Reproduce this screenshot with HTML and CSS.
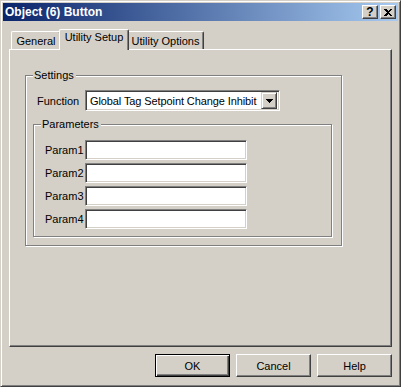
FILE: index.html
```html
<!DOCTYPE html>
<html lang="en">
<head>
    <meta charset="UTF-8">
    <title>Object (6) Button</title>
    <link rel="stylesheet" href="styles.css">
</head>
<body>

    <div class="window">
        <div class="titlebar">
            <span class="title">Object (6) Button</span>
            <div class="caption-buttons">
                <button class="caption-btn">?</button>
                <button class="caption-btn">
                    <svg width="8" height="7" viewBox="0 0 8 7" shape-rendering="crispEdges">
                        <path d="M0 0H2L4 2L6 0H8L5 3.5L8 7H6L4 5L2 7H0L3 3.5Z" fill="#000"/>
                    </svg>
                </button>
            </div>
        </div>

        <div class="content">
            <div class="tabs">
                <div class="tab tab-general">General</div>
                <div class="tab tab-setup active">Utility Setup</div>
                <div class="tab tab-options">Utility Options</div>
            </div>

            <div class="panel">
                <div class="group settings">
                    <div class="group-title">Settings</div>
                    <div class="function-row">
                        <label>Function</label>
                        <div class="combo">
                            <span class="combo-text">Global Tag Setpoint Change Inhibit</span>
                            <span class="combo-btn">
                                <svg width="7" height="4" viewBox="0 0 7 4" shape-rendering="crispEdges">
                                    <path d="M0 0H7V1H6V2H5V3H4V4H3V3H2V2H1V1H0Z" fill="#000"/>
                                </svg>
                            </span>
                        </div>
                    </div>

                    <!-- Parameters -->
                    <div class="group params">
                        <div class="group-title">Parameters</div>
                        <div class="param-list">
                            <div class="param-row"><label for="p1">Param1</label><input type="text" id="p1"></div>
                            <div class="param-row"><label for="p2">Param2</label><input type="text" id="p2"></div>
                            <div class="param-row"><label for="p3">Param3</label><input type="text" id="p3"></div>
                            <div class="param-row"><label for="p4">Param4</label><input type="text" id="p4"></div>
                        </div>
                    </div>
                </div>
            </div>

            <div class="dialog-buttons">
                <button class="default">OK</button>
                <button>Cancel</button>
                <button>Help</button>
            </div>
        </div>
    </div>

</body>
</html>
```

FILE: styles.css
```css
* {
    box-sizing: border-box;
}
body {
    margin: 0;
    font-family: 'Liberation Sans', Arial, sans-serif;
    font-size: 11px;
    color: #000;
    background: #d4d0c8;
}
.window {
    width: 401px;
    height: 387px;
    display: flex;
    flex-direction: column;
    background: #d4d0c8;
    border: 1px solid;
    border-color: #d4d0c8 #404040 #404040 #d4d0c8;
    box-shadow: inset 1px 1px #fff, inset -1px -1px #808080;
    padding: 2px;
}
.titlebar {
    height: 18px;
    display: flex;
    align-items: center;
    justify-content: space-between;
    padding: 0 2px;
    background: linear-gradient(to right, #0a246a, #a6caf0);
}
.title {
    color: #fff;
    font-weight: 700;
    font-size: 12px;
}
.caption-buttons {
    display: flex;
    gap: 2px;
}
.caption-btn {
    width: 16px;
    height: 14px;
    padding: 0;
    display: flex;
    align-items: center;
    justify-content: center;
    background: #d4d0c8;
    border: 1px solid;
    border-color: #fff #404040 #404040 #fff;
    box-shadow: inset -1px -1px #808080;
    font-family: 'Liberation Sans', Arial, sans-serif;
    font-size: 12px;
    font-weight: 700;
    color: #000;
    line-height: 12px;
}
.content {
    flex: 1;
    display: flex;
    flex-direction: column;
    padding: 8px 6px 7px 6px;
}
.tabs {
    display: flex;
    align-items: flex-end;
    height: 20px;
    padding-left: 2px;
}
.tab {
    height: 18px;
    padding-top: 3px;
    line-height: 13px;
    text-align: center;
    white-space: nowrap;
    background: #d4d0c8;
    border: 1px solid;
    border-bottom: none;
    border-color: #fff #404040 #404040 #fff;
    border-radius: 2px 2px 0 0;
    box-shadow: inset -1px 0 #808080;
}
.tab.active {
    height: 21px;
    padding-top: 1px;
    margin: 0 -2px -1px;
    position: relative;
    z-index: 1;
}
.tab-general {
    width: 50px;
}
.tab-setup {
    width: 70px;
}
.tab-options {
    width: 77px;
}
.panel {
    flex: 1;
    padding: 25px 0 0 15px;
    border: 1px solid;
    border-color: #fff #404040 #404040 #fff;
    box-shadow: inset -1px -1px #808080;
}
.group {
    border: 1px solid #808080;
    box-shadow: inset 1px 1px #fff, 1px 1px #fff;
    padding-left: 7px;
}
.group-title {
    width: fit-content;
    margin-top: -7px;
    padding: 0 2px 0 1px;
    line-height: 13px;
    background: #d4d0c8;
}
.settings {
    width: 317px;
    height: 171px;
}
.function-row {
    display: flex;
    align-items: center;
    margin-top: 8px;
    padding-left: 4px;
}
.function-row label {
    width: 48px;
}
.combo {
    width: 195px;
    height: 21px;
    padding: 2px;
    display: flex;
    align-items: center;
    background: #fff;
    border: 1px solid;
    border-color: #808080 #fff #fff #808080;
    box-shadow: inset 1px 1px #404040, inset -1px -1px #d4d0c8;
}
.combo-text {
    flex: 1;
    padding-left: 2px;
    letter-spacing: -0.1px;
    white-space: nowrap;
    overflow: hidden;
}
.combo-btn {
    width: 16px;
    height: 17px;
    display: flex;
    align-items: center;
    justify-content: center;
    background: #d4d0c8;
    border: 1px solid;
    border-color: #d4d0c8 #404040 #404040 #d4d0c8;
    box-shadow: inset 1px 1px #fff, inset -1px -1px #808080;
}
.params {
    width: 299px;
    height: 113px;
    margin-top: 13px;
}
.param-list {
    display: flex;
    flex-direction: column;
    gap: 3px;
    margin-top: 9px;
}
.param-row {
    display: flex;
    align-items: center;
    padding-left: 4px;
}
.param-row label {
    width: 40px;
}
.param-row input {
    width: 162px;
    height: 20px;
    margin: 0;
    padding: 0 2px;
    font: inherit;
    background: #fff;
    outline: none;
    border: 1px solid;
    border-color: #808080 #fff #fff #808080;
    box-shadow: inset 1px 1px #404040, inset -1px -1px #d4d0c8;
}
.dialog-buttons {
    display: flex;
    justify-content: flex-end;
    gap: 6px;
    margin-top: 7px;
}
.dialog-buttons button {
    width: 75px;
    height: 23px;
    padding: 0;
    font-family: 'Liberation Sans', Arial, sans-serif;
    font-size: 11px;
    color: #000;
    background: #d4d0c8;
    border: 1px solid;
    border-color: #fff #404040 #404040 #fff;
    box-shadow: inset -1px -1px #808080;
}
.dialog-buttons .default {
    border-color: #000;
    box-shadow: inset 1px 1px #fff, inset -1px -1px #404040, inset -2px -2px #808080;
}
```
